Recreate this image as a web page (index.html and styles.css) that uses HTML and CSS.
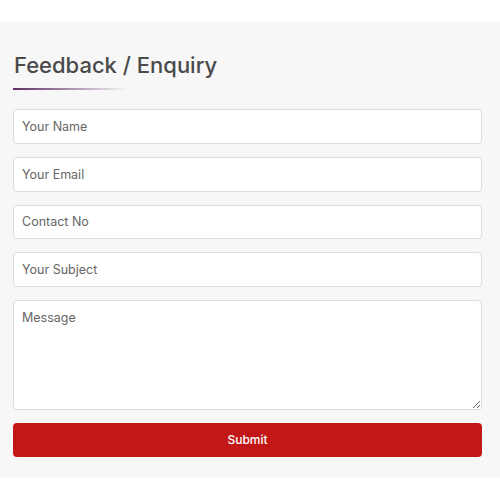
FILE: index.html
```html
<!DOCTYPE html>
<html>
<head>
<meta charset="utf-8">
<link rel="stylesheet" href="styles.css">
</head>
<body>
<section class="panel">
  <h2 class="title">Feedback / Enquiry</h2>
  <div class="underline"></div>
  <form class="form">
    <input class="field" type="text" placeholder="Your Name">
    <input class="field" type="text" placeholder="Your Email">
    <input class="field" type="text" placeholder="Contact No">
    <input class="field" type="text" placeholder="Your Subject">
    <textarea class="field area" placeholder="Message"></textarea>
    <button class="submit" type="button">Submit</button>
  </form>
</section>
</body>
</html>
```
FILE: styles.css
```css
html, body {
  margin: 0;
  padding: 0;
  background: #ffffff;
  font-family: "Inter", "Open Sans", sans-serif;
}
.panel {
  margin-top: 22px;
  background: #f7f7f7;
  padding: 30px 18px 21px 13px;
}
.title {
  margin: 0 0 0 1px;
  font-size: 22px;
  font-weight: 500;
  color: #4a4a4a;
  line-height: 26px;
}
.underline {
  margin-top: 10px;
  width: 115px;
  height: 2px;
  background: linear-gradient(to right, #5e2d63, rgba(94,45,99,0));
}
.form {
  margin-top: 19px;
  display: flex;
  flex-direction: column;
  gap: 13px;
}
.field {
  box-sizing: border-box;
  height: 34.75px;
  width: 100%;
  border: 1px solid #dcdcdc;
  border-radius: 4px;
  background: #fff;
  padding: 0 8px;
  font-family: inherit;
  font-size: 12.5px;
  color: #555;
  outline: none;
  margin: 0;
}
.field::placeholder { color: #666666; }
.area {
  height: 109.5px;
  padding-top: 9px;
  resize: vertical;
  display: block;
}
.submit {
  height: 34px;
  border: none;
  border-radius: 4px;
  background: #c21717;
  color: #fff;
  font-family: inherit;
  font-size: 12px;
  font-weight: 500;
  margin: 0;
}
```
